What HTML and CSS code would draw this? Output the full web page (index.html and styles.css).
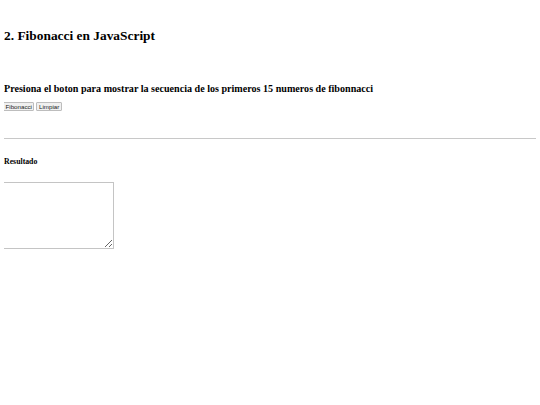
FILE: index.html
```html
<!DOCTYPE html>
<html lang="es">
<head>
<meta charset="utf-8">
<title>Fibonacci en JavaScript</title>
<link rel="stylesheet" href="styles.css">
</head>
<body>
<h2 class="title">2. Fibonacci en JavaScript</h2>
<h3 class="prompt">Presiona el boton para mostrar la secuencia de los primeros 15 numeros de fibonnacci</h3>
<div class="actions">
  <button class="btn" type="button">Fibonacci</button>
  <button class="btn" type="button">Limpiar</button>
</div>
<hr class="divider">
<h4 class="result-label">Resultado</h4>
<textarea class="result"></textarea>
</body>
</html>
```

FILE: styles.css
```css
html, body {
  background: #ffffff;
}
body {
  margin: 0 4px;
  font-family: "Liberation Serif", "Times New Roman", serif;
  color: #000000;
}
.title {
  font-size: 13.4px;
  line-height: 15px;
  font-weight: bold;
  margin: 28px 0 0;
}
.prompt {
  font-size: 10.1px;
  line-height: 12px;
  font-weight: bold;
  margin: 40px 0 0;
}
.actions {
  display: flex;
  gap: 2px;
  margin-top: 7px;
  margin-left: -1px;
}
.btn {
  font-family: "Liberation Sans", Arial, sans-serif;
  font-size: 6.2px;
  line-height: 7px;
  padding: 0 1.5px;
  margin: 0;
  border: 1px solid #bdbdbd;
  border-radius: 1px;
  background: #f0f0f0;
  color: #222222;
}
.divider {
  margin: 27px 0 0;
  border: 0;
  border-top: 1px solid #c8c8c8;
  height: 0;
}
.result-label {
  font-size: 7.8px;
  line-height: 9px;
  font-weight: bold;
  margin: 18px 0 0;
}
.result {
  display: block;
  box-sizing: border-box;
  width: 111px;
  height: 67px;
  margin: 16px 0 0 -1px;
  border: 1px solid #c4c4c4;
  padding: 1px;
}
```
